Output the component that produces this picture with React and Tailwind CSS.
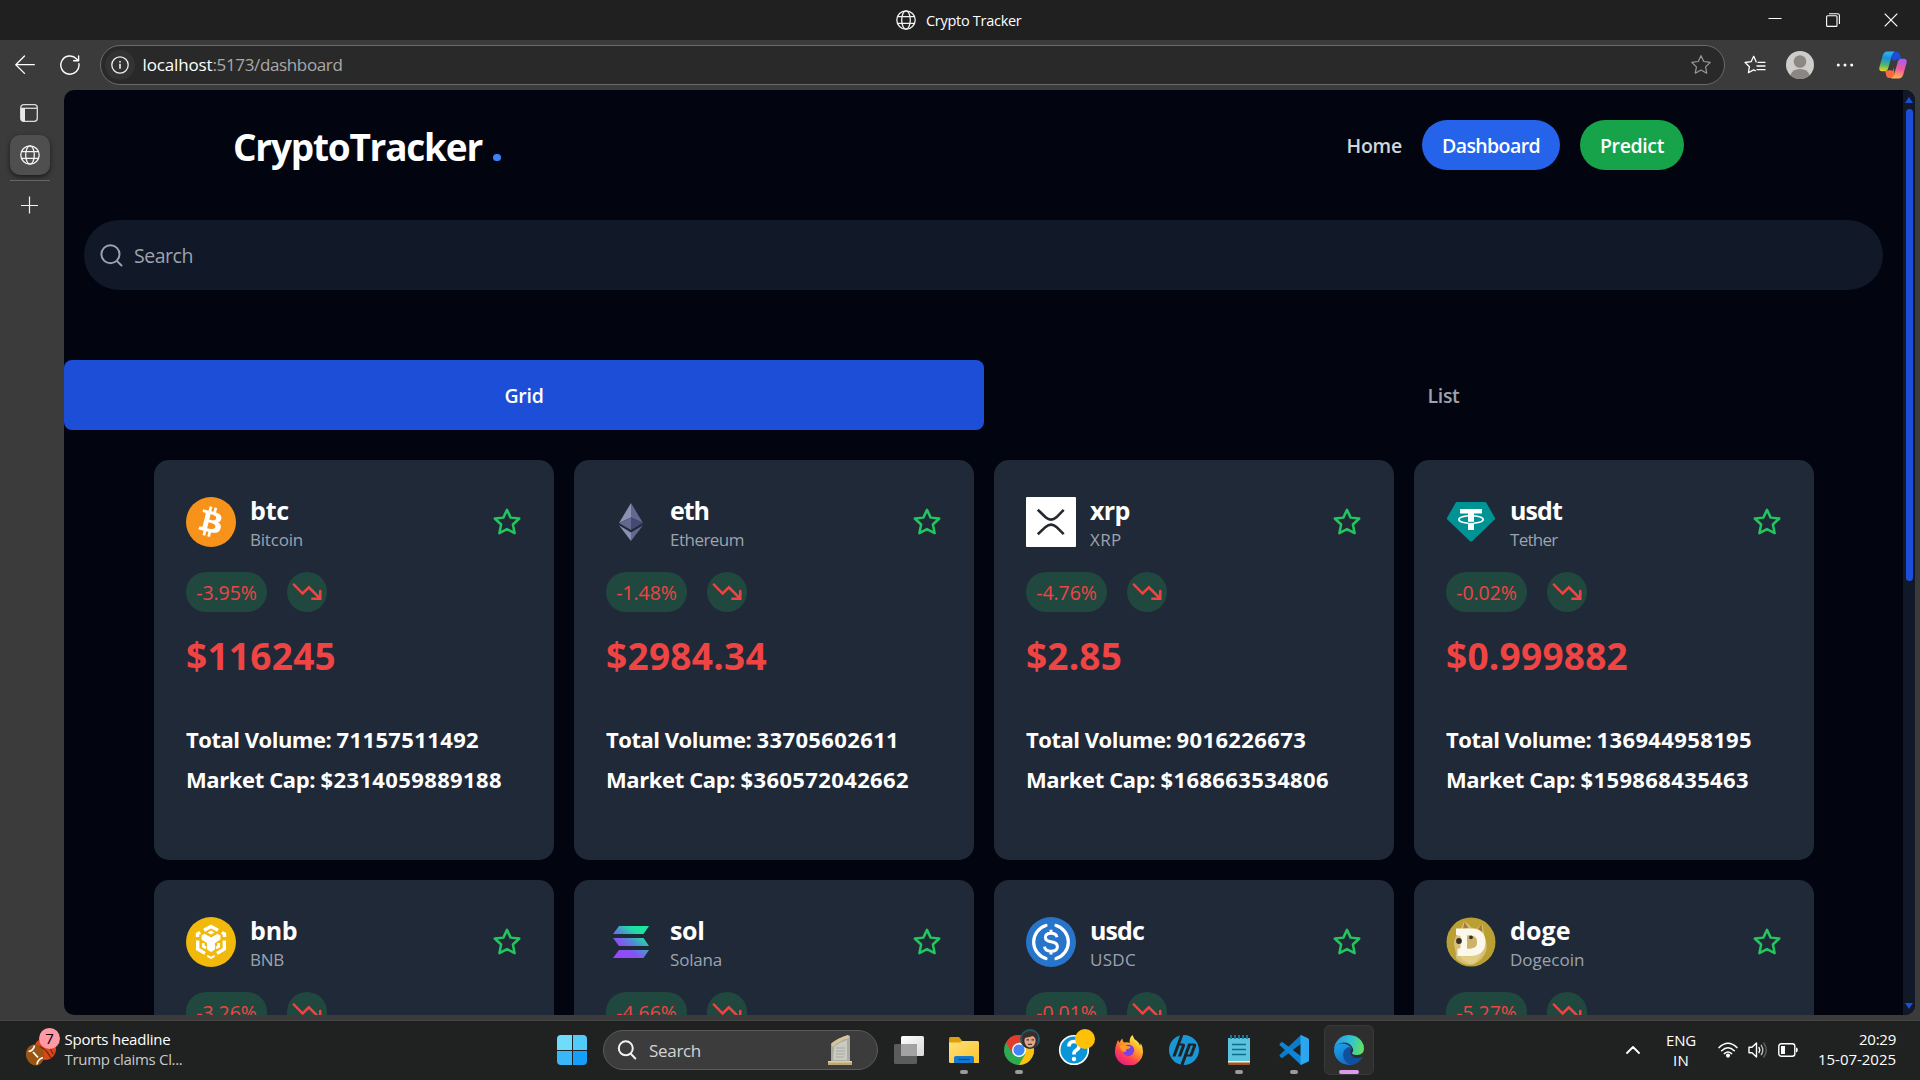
import React, { useLayoutEffect, useRef } from "react";
import { FaBitcoin } from "react-icons/fa";
import { SiHp } from "react-icons/si";

/* Inline text whose tracking is adjusted so that it occupies `w` pixels. */
function Fit({ w, className = "", children }) {
  const ref = useRef(null);
  useLayoutEffect(() => {
    const el = ref.current;
    el.style.letterSpacing = "0px";
    const natural = el.getBoundingClientRect().width;
    el.style.letterSpacing = `${(w - natural) / el.textContent.length}px`;
  }, [w, children]);
  return (
    <span ref={ref} className={"inline-block whitespace-pre " + className}>
      {children}
    </span>
  );
}

const Globe = () => (
  <svg viewBox="0 0 20 20" className="size-5" fill="none" stroke="#f2f2f2" strokeWidth="1.3">
    <circle cx="10" cy="10" r="9.2" />
    <ellipse cx="10" cy="10" rx="4.3" ry="9.2" />
    <path d="M1.6 6.7h16.8M1.6 13.3h16.8" />
  </svg>
);

function TitleBar() {
  return (
    <div className="flex h-10 shrink-0 items-center bg-[#202020]">
      <div className="ml-[896px] flex items-center">
        <Globe />
        <Fit w={95.5} className="ml-[10px] pt-px text-[14.5px]">Crypto Tracker</Fit>
      </div>
      <div className="ml-auto flex items-center pr-[22px]">
        <svg viewBox="0 0 14 14" className="size-[14px]" fill="none" stroke="#fff" strokeWidth="1"><path d="M.5 5.5h13" /></svg>
        <svg viewBox="0 0 14 14" className="ml-11 size-[14px]" fill="none" stroke="#fff" strokeWidth="1.1"><rect x=".6" y="2.8" width="10.4" height="10.6" rx="1" /><path d="M3 .8h8.6q1.8 0 1.8 1.8V11" /></svg>
        <svg viewBox="0 0 14 14" className="ml-11 size-[14px]" fill="none" stroke="#fff" strokeWidth="1.2"><path d="M.7.7l12.6 12.6M13.3.7L.7 13.3" /></svg>
      </div>
    </div>
  );
}

const starPath = "M10 1.5l2.55 5.3 5.85.8-4.25 4.05 1.05 5.8L10 14.6l-5.2 2.85 1.05-5.8L1.6 7.6l5.85-.8z";

function Toolbar() {
  return (
    <div className="flex h-[50px] shrink-0 items-center pl-[15px]">
      <svg viewBox="0 0 20 20" className="size-5" fill="none" stroke="#fff" strokeWidth="1.3" strokeLinecap="round" strokeLinejoin="round"><path d="M19.3 9.7H.8M9.5 1L.8 9.7l8.7 8.7" /></svg>
      <svg viewBox="0 0 20 20" className="ml-[25px] size-5" fill="none" stroke="#fff" strokeWidth="1.4" strokeLinecap="round" strokeLinejoin="round"><path d="M18.9 8.6a9.1 9.1 0 1 1-2.3-4.7l1.9 1.8M18.6.9v4.9h-5" /></svg>
      <div className="ml-5 flex h-10 w-[1625px] items-center rounded-full border border-[#6a6a6a] bg-[#292929] pl-[4px]">
        <div className="flex size-[30px] items-center justify-center rounded-full bg-[#333333]">
          <svg viewBox="0 0 18 18" className="size-[18px]" fill="none" stroke="#f0f0f0" strokeWidth="1.3"><circle cx="9" cy="9" r="8.2" /><path d="M9 7.8v5M9 5v1.4" strokeWidth="1.6" /></svg>
        </div>
        <div className="ml-[7.5px] flex pb-px text-[17px] leading-6">
          <Fit w={70} className="text-white">localhost</Fit>
          <Fit w={130} className="text-[#a9a9a9]">:5173/dashboard</Fit>
        </div>
        <svg viewBox="0 0 20 20" className="mr-[12px] ml-auto size-[22px]" fill="none" stroke="#9a9a9a" strokeWidth="1.1" strokeLinejoin="round"><path d={starPath} /></svg>
      </div>
      <svg viewBox="0 0 22 20" className="ml-[19px] h-5 w-[22px]" fill="none" stroke="#fff" strokeWidth="1.3" strokeLinejoin="round" strokeLinecap="round"><path d="M12 6.800h.2L9.700 1.300 7.100 6.700l-6 .8 4.300 4.200-1 6 5.200-2.800 1.600.8M14 7.300h7M13 11h8M13 14.700h8" /></svg>
      <svg viewBox="0 0 28 28" className="ml-5 size-7"><circle cx="14" cy="14" r="14" fill="#cfcdca" /><circle cx="14" cy="10.500" r="6.300" fill="#8a8784" /><path d="M4.400 24.200Q6.300 18 14 18t9.600 6.200A14 14 0 0 1 4.400 24.200z" fill="#8a8784" /></svg>
      <svg viewBox="0 0 18 4" className="ml-[22px] h-1 w-[18px]" fill="#fff"><circle cx="2.300" cy="2" r="1.500" /><circle cx="9" cy="2" r="1.500" /><circle cx="15.700" cy="2" r="1.500" /></svg>
      <svg viewBox="0 0 28 28" className="ml-[25px] size-7">
        <defs>
          <linearGradient id="cpA" x1=".5" y1="0" x2=".4" y2="1"><stop offset="0" stopColor="#2fb4f5" /><stop offset=".35" stopColor="#1b8fd6" /><stop offset=".7" stopColor="#52b76b" /><stop offset="1" stopColor="#f0d21c" /></linearGradient>
          <linearGradient id="cpB" x1=".6" y1="0" x2=".4" y2="1"><stop offset="0" stopColor="#a95bf0" /><stop offset=".5" stopColor="#f0599a" /><stop offset="1" stopColor="#ffb350" /></linearGradient>
        </defs>
        <path d="M12 1h6q2 0 2.600 2l1.500 5h-3q-2 0-2.600 2l-2 4z" fill="#1a4fd8" />
        <path d="M16 27H10q-2 0-2.600-2L6 19.500h3.500q2 0 2.600-2l2-4z" fill="#ff6a3c" />
        <path d="M8.500.5H16q-2.200.8-3 3.500L9.300 17q-.9 3.200-4.300 3.200H3Q-.4 20.200.4 16.200L3.700 4.500Q4.900.5 8.500.5z" fill="url(#cpA)" />
        <path d="M19.500 27.500H12q2.200-.8 3-3.500l3.700-13q.9-3.200 4.300-3.200h2q3.400 0 2.600 4l-3.300 11.700q-1.200 4-4.800 4z" fill="url(#cpB)" />
        <path d="M16 9.500l-3.800 10" stroke="#3b3b3b" strokeWidth="3" />
      </svg>
    </div>
  );
}

function SideTabs() {
  return (
    <div className="flex w-16 shrink-0 flex-col pt-[14px] pl-[10px]">
      <svg viewBox="0 0 18 18" className="ml-[10px] size-[18px]" fill="none" stroke="#dcdcdc" strokeWidth="1.300"><rect x=".7" y=".7" width="16.600" height="16.600" rx="3" /><path d="M1 4.300h16" /><path d="M1 4.300h4v13H3q-2 0-2-2z" fill="#e8e8e8" stroke="none" /></svg>
      <div className="mt-[13px] flex size-10 items-center justify-center rounded-[10px] bg-[#4f4f4f] shadow-[0_2px_5px_rgba(0,0,0,0.55)]"><Globe /></div>
      <div className="mt-[5px] h-px w-10 bg-[#666666]" />
      <svg viewBox="0 0 18 18" className="mt-[15px] ml-[10px] size-[18px]" stroke="#f2f2f2" strokeWidth="1.200"><path d="M9.500 .5v17M1 9.500h17" /></svg>
    </div>
  );
}

const Bitcoin = () => (
  <div className="flex size-[50px] items-center justify-center rounded-full bg-[radial-gradient(circle,white_60%,#f7931a_62%)]">
    <FaBitcoin className="size-[50px] text-[#f7931a]" />
  </div>
);
const Ethereum = () => (
  <svg viewBox="0 0 50 50" className="size-[50px]">
    <path d="M25 6L13 26l12-5.500z" fill="#8a92b2" /><path d="M25 6l12 20-12-5.500z" fill="#62688f" />
    <path d="M13 26l12-5.500V33z" fill="#62688f" /><path d="M37 26l-12-5.500V33z" fill="#454a75" />
    <path d="M13 28.300L25 35.500V44z" fill="#8a92b2" /><path d="M37 28.300L25 35.500V44z" fill="#62688f" />
  </svg>
);
const Xrp = () => (
  <svg viewBox="0 0 50 50" className="size-[50px]">
    <rect width="50" height="50" rx="1" fill="#fff" />
    <path d="M11.800 12.800l7.800 7.500q5.400 4.600 10.800 0l7.300-7.500M11.800 37.200l7.800-7.300q5.400-4.600 10.800 0l7.300 7.300" fill="none" stroke="#23292f" strokeWidth="2.600" />
  </svg>
);
const Tether = () => (
  <svg viewBox="0 0 50 50" className="size-[50px]">
    <path d="M11 5h28q1 0 1.500.9L49 21q.4.800-.3 1.500L26 44.200q-1 .9-2 0L1.300 22.500Q.6 21.800 1 21L9.500 5.900Q10 5 11 5z" fill="#009393" />
    <path d="M14 12h22v4.500h-8V33h-6V16.500h-8z" fill="#fff" />
    <ellipse cx="25" cy="22.500" rx="12.200" ry="3.800" fill="none" stroke="#fff" strokeWidth="1.600" />
    <path d="M22 25.300h6" stroke="#009393" strokeWidth="1" />
  </svg>
);
const Bnb = () => (
  <svg viewBox="0 0 50 50" className="size-[50px]">
    <circle cx="25" cy="25" r="25" fill="#f0b90b" />
    <g fill="none" stroke="#fff" strokeWidth="3.400" strokeLinejoin="miter">
      <path d="M18 13.300L25 9.500l7 3.800M11.500 20v-3l2.700-1.600M38.500 20v-3l-2.700-1.600M11.700 23.500V32l7.300 4.400M38.300 23.500V32L31 36.400" />
      <path d="M17.300 26v3.500l2.700 1.500M32.700 26v3.500L30 31" strokeWidth="2.800" />
    </g>
    <path d="M15.500 18.500l3-1.700L25 20.500l6.500-3.700 3 1.700v4L29 26v6.500L25 35l-4-2.500V26l-5.500-3.500zM21.500 15.500L25 13.400l3.500 2.100L25 17.600zM21.300 37.800l3.700 2 3.700-2V40L25 42l-3.700-2z" fill="#fff" />
  </svg>
);
const Solana = () => (
  <svg viewBox="0 0 50 50" className="size-[50px]">
    <defs><linearGradient id="sol" gradientUnits="userSpaceOnUse" x1="40" y1="6" x2="12" y2="42"><stop offset="0" stopColor="#14f195" /><stop offset=".3" stopColor="#24d8a8" /><stop offset=".5" stopColor="#4f8fd0" /><stop offset=".7" stopColor="#8752f3" /><stop offset="1" stopColor="#9945ff" /></linearGradient></defs>
    <g fill="url(#sol)"><path d="M13 9h30l-5.500 8H7z" /><path d="M7 21h30.500l5.500 8H13z" /><path d="M13 33h30l-5.500 8H7z" /></g>
  </svg>
);
const Usdc = () => (
  <svg viewBox="0 0 50 50" className="size-[50px]">
    <circle cx="25" cy="25" r="25" fill="#2775ca" />
    <path d="M20 8.500a17.200 17.200 0 0 0 0 33M30 8.500a17.200 17.200 0 0 1 0 33" fill="none" stroke="#fff" strokeWidth="3.200" strokeLinecap="round" />
    <path d="M31 20.300q-.7-4.100-6-4.100-5.600 0-5.600 4.100 0 3.800 5.600 4.500 6.400.8 6.400 5 0 4.500-6.400 4.500-6 0-6.500-4.600M25 12.800v3.400M25 34v3.400" fill="none" stroke="#fff" strokeWidth="3" />
  </svg>
);
const Doge = () => (
  <svg viewBox="0 0 50 50" className="size-[50px]">
    <circle cx="25" cy="25" r="24.500" fill="#ba9f33" />
    <path d="M14 14L18 4.500q5 2 7 6l6 1 5-5q2 6 2 13 4 7 2 15-3 8-12 13-10 2-18-6 0-6-1-10-4-8 5-17.500z" fill="#d6bf78" />
    <path d="M17 12l1.500-7 4 6zM32 12l3.500-5 1 8z" fill="#a8793a" />
    <path d="M12 36q10 8 24-2-2 9-10 13-8 0-14-11z" fill="#e2cd84" />
    <path fillRule="evenodd" d="M10 11.500h14q15.500 0 15.500 13.500T24 39H11.500v-7l3-1V19l-4.500-1zM21 18.500v13h3q7 0 7-6.500t-7-6.500z" fill="#fbf7ea" />
    <path d="M21 18.500h3q7 0 7 6.500t-7 6.500h-3z" fill="#cdb36a" />
    <circle cx="13" cy="24" r="2.900" fill="#3a3020" /><circle cx="25" cy="20.300" r="1.900" fill="#3a2f1c" />
  </svg>
);

const coins = [
  { s: "btc", sw: 39, n: "Bitcoin", nw: 53, pct: "-3.95%", price: "$116245", pw: 150, vol: "71157511492", cap: "2314059889188", Logo: Bitcoin },
  { s: "eth", sw: 39, n: "Ethereum", nw: 74, pct: "-1.48%", price: "$2984.34", pw: 161, vol: "33705602611", cap: "360572042662", Logo: Ethereum },
  { s: "xrp", sw: 39.5, n: "XRP", nw: 31.5, pct: "-4.76%", price: "$2.85", pw: 96, vol: "9016226673", cap: "168663534806", Logo: Xrp },
  { s: "usdt", sw: 52, n: "Tether", nw: 47.5, pct: "-0.02%", price: "$0.999882", pw: 182, vol: "136944958195", cap: "159868435463", Logo: Tether },
  { s: "bnb", sw: 47.5, n: "BNB", nw: 34, pct: "-3.26%", Logo: Bnb },
  { s: "sol", sw: 34.5, n: "Solana", nw: 52, pct: "-4.66%", Logo: Solana },
  { s: "usdc", sw: 54, n: "USDC", nw: 46, pct: "-0.01%", Logo: Usdc },
  { s: "doge", sw: 60.5, n: "Dogecoin", nw: 74.5, pct: "-5.27%", Logo: Doge },
];

const DIGIT = 12.96;

function CoinCard({ coin }) {
  const { Logo } = coin;
  return (
    <div className="h-[400px] w-[400px] rounded-[15px] bg-[#1f2937] px-8 pt-[30px]">
      <div className="flex h-16 items-center">
        <Logo />
        <div className="ml-[14px] flex flex-col pt-[3px]">
          <Fit w={coin.sw} className="self-start text-[25px] leading-[33px] font-bold text-white">{coin.s}</Fit>
          <Fit w={coin.nw} className="self-start text-[17px] leading-[26px] text-[#9ca3af]">{coin.n}</Fit>
        </div>
        <svg viewBox="0 0 24 24" className="ml-auto size-[30px]" fill="none" stroke="#22c55e" strokeWidth="2" strokeLinejoin="round"><path d="M12 2.300l2.900 6.200 6.900.7-5.100 4.800 1.400 6.900-6.100-3.200-6.100 3.200 1.400-6.900-5.100-4.800 6.900-.7z" /></svg>
      </div>
      <div className="mt-[18px] flex gap-5">
        <div className="flex h-10 w-[81px] items-center justify-center rounded-full bg-[#20483f] pt-0.5 text-[19.500px] text-[#ef4444]"><Fit w={60.500}>{coin.pct}</Fit></div>
        <div className="flex size-10 items-center justify-center rounded-full bg-[#20483f]">
          <svg viewBox="0 0 24 24" className="size-[30px]" fill="none" stroke="#ef4444" strokeWidth="2" strokeLinecap="round" strokeLinejoin="miter"><path d="M1.500 6L8.500 13.200l5-5L22.300 17M16.200 17.300h6.400v-6.100" /></svg>
        </div>
      </div>
      {coin.price && (
        <>
          <div className="mt-[19px] h-[50px] text-[37px] leading-[50px] font-bold text-[#ef4444]"><Fit w={coin.pw}>{coin.price}</Fit></div>
          <div className="mt-[38px] text-[22px] leading-10 font-bold text-white">
            <div className="flex"><Fit w={150.500}>{"Total Volume: "}</Fit><Fit w={DIGIT * coin.vol.length}>{coin.vol}</Fit></div>
            <div className="flex"><Fit w={134.500}>{"Market Cap: "}</Fit><Fit w={DIGIT * (coin.cap.length + 1)}>{"$" + coin.cap}</Fit></div>
          </div>
        </>
      )}
    </div>
  );
}

function Page() {
  return (
    <div className="flex h-[925px] w-[1851px] overflow-hidden rounded-[10px] bg-[#02050f]">
      <main className="w-[1839px] shrink-0">
        <nav className="flex h-[130px] items-start pt-[30px] pr-[219px] pl-[169px]">
          <div className="flex h-[50px] items-center pt-[4px] text-[37px] font-bold">
            <Fit w={249} className="text-white">CryptoTracker</Fit>
            <div className="mt-[21px] ml-[11px] size-[7.500px] rounded-full bg-[#3b82f6]" />
          </div>
          <div className="ml-auto flex items-center gap-5 text-[19.500px] font-semibold text-white">
            <Fit w={55.500} className="pt-0.5 text-[#d1d5db]">Home</Fit>
            <div className="flex h-[50px] w-[138px] items-center justify-center rounded-full bg-[#2563eb] pt-0.5"><Fit w={98}>Dashboard</Fit></div>
            <div className="flex h-[50px] w-[104px] items-center justify-center rounded-full bg-[#16a34a] pt-0.5"><Fit w={64}>Predict</Fit></div>
          </div>
        </nav>
        <div className="ml-5 flex h-[70px] w-[1799px] items-center rounded-full bg-[#111827] pl-[15px] text-[#9ca3af]">
          <svg viewBox="0 0 24 24" className="size-[25px]" fill="none" stroke="currentColor" strokeWidth="1.900" strokeLinecap="round"><circle cx="11" cy="10.800" r="8.700" /><path d="M17.600 17.600l4 4" /></svg>
          <Fit w={59} className="ml-[10px] pt-0.5 text-[19.500px]">Search</Fit>
        </div>
        <div className="mt-[70px] flex h-[70px] text-[19.500px] font-semibold">
          <div className="flex w-[920px] items-center justify-center rounded-[8px] bg-[#1d4ed8] pt-0.5 text-white"><Fit w={39}>Grid</Fit></div>
          <div className="flex flex-1 items-center justify-center pt-0.5 text-[#9ca3af]"><Fit w={32}>List</Fit></div>
        </div>
        <div className="mt-[30px] ml-[90px] grid w-[1660px] grid-cols-4 gap-5">
          {coins.map((c) => <CoinCard key={c.s} coin={c} />)}
        </div>
      </main>
      <div className="flex w-3 shrink-0 flex-col items-center bg-[#111827] pt-[7px] pb-[6px]">
        <svg viewBox="0 0 8 6" className="h-1.5 w-2"><path d="M4 0l4 6H0z" fill="#1d4ed8" /></svg>
        <div className="mt-[6px] h-[472px] w-[7px] rounded-full bg-[#1d4ed8]" />
        <svg viewBox="0 0 8 6" className="mt-auto h-1.5 w-2"><path d="M0 0h8L4 6z" fill="#1d4ed8" /></svg>
      </div>
    </div>
  );
}

const TaskView = () => (
  <svg viewBox="0 0 30 30" className="size-[30px]">
    <defs><linearGradient id="tv" x1="0" y1="0" x2="1" y2="1"><stop offset="0" stopColor="#fff" /><stop offset="1" stopColor="#d8d8d8" /></linearGradient></defs>
    <rect x="7" y="1" width="23" height="20" rx="1.500" fill="url(#tv)" /><rect x="0" y="9" width="23" height="20" rx="1.500" fill="#5c5c5c" /><path d="M7 9h14.500q1.500 0 1.500 1.500V21H7z" fill="#a3a3a3" />
  </svg>
);
const Explorer = () => (
  <svg viewBox="0 0 30 30" className="size-[30px]">
    <defs><linearGradient id="ex" x1="0" y1="0" x2="1" y2="1"><stop offset="0" stopColor="#ffe07a" /><stop offset="1" stopColor="#fcc52c" /></linearGradient></defs>
    <path d="M0 3.500Q0 2 1.500 2H10l3 3.500V9H0z" fill="#dea00a" /><path d="M0 7.500h11L13 6h15.500Q30 6 30 7.500V28H1.500Q0 28 0 27z" fill="url(#ex)" />
    <path d="M5 28v-5q0-2 2-2h16q2 0 2 2v5z" fill="#1478cf" /><path d="M9.500 24.500h11" stroke="#0b4a8a" strokeWidth="1.200" />
  </svg>
);
const Chrome = () => (
  <svg viewBox="0 0 30 30" className="size-[30px] overflow-visible">
    <circle cx="15" cy="15" r="15" fill="#2da94f" />
    <path d="M15 0a15 15 0 0 1 13 7.500H15L8.500 18.700 2 7.500A15 15 0 0 1 15 0z" fill="#e33b2e" />
    <path d="M28 7.500A15 15 0 0 1 15 30l6.500-11.200L15 7.500z" fill="#fdc10f" />
    <circle cx="15" cy="15" r="7" fill="#fff" /><circle cx="15" cy="15" r="5.600" fill="#4285f4" />
    <circle cx="26" cy="4" r="10" fill="#1d5a6e" /><path d="M19 11q-2-8 0-12 7-6 14 0 2 5-.5 12-6.500 5-13.500 0z" fill="#3b2c28" /><ellipse cx="26" cy="6" rx="5.600" ry="6.500" fill="#dba58c" /><path d="M20 3q2-5 7-4 5 0 5.500 4l-4-2-3 1z" fill="#3b2c28" /><path d="M22.500 4.800h2.500M27.500 4.800H30M24 9.300h4" stroke="#5b3228" strokeWidth="1.200" />
  </svg>
);
const Help = () => (
  <svg viewBox="0 0 30 30" className="size-[30px] overflow-visible">
    <circle cx="15" cy="15" r="14.300" fill="#0a95d8" stroke="#fff" strokeWidth="1.600" />
    <path d="M10 11.500Q10 6.500 15 6.500t5 4.500q0 2.500-2.500 4T15 18.500v1" fill="none" stroke="#fff" strokeWidth="3.600" /><circle cx="15" cy="24" r="2.200" fill="#fff" />
    <circle cx="26" cy="4" r="10" fill="#ffc107" />
  </svg>
);
const Firefox = () => (
  <svg viewBox="0 0 30 30" className="size-[30px]">
    <defs>
      <linearGradient id="ff" gradientUnits="userSpaceOnUse" x1="24" y1="3" x2="7" y2="28"><stop offset="0" stopColor="#fff04a" /><stop offset=".35" stopColor="#ffa824" /><stop offset=".7" stopColor="#ff4450" /><stop offset="1" stopColor="#e81e80" /></linearGradient>
    </defs>
    <path d="M2.500 9Q3 6.500 4.300 5q.3 1.700 1.200 2.700Q7 4.500 8.500 3.500q-.2 2.500 1.500 4 3.500-.5 6 .3-1.500-5 2.500-7.800 1 4 4.500 6 2.300 1.500 3 4.500.8-1 .8-2.500 2.200 4 2.200 8.500A14 14 0 0 1 1 17Q.8 12.500 2.500 9z" fill="url(#ff)" />
    <circle cx="14.500" cy="15.300" r="5.700" fill="#7d3fe6" />
    <path d="M5.500 11q4-3 8 .3 2.300-.5 3.200.7-1 1.800-3.200 2-2.500 1-1.500 3-5 .5-6.500-6z" fill="#ff9a24" />
  </svg>
);
const Notepad = () => (
  <svg viewBox="0 0 30 30" className="size-[30px]">
    <rect x="4" y="26" width="22" height="4" rx="1" fill="#a5551c" /><rect x="4" y="25" width="22" height="2.500" fill="#eee" />
    <path d="M4 3h22v23H4z" fill="#5cc3dd" /><path d="M7 0v4M11 0v4M15 0v4M19 0v4M23 0v4" stroke="#1b7d9c" strokeWidth="1.800" />
    <path d="M8 9.500h14M8 14.500h14M8 19.500h14" stroke="#0d6d8e" strokeWidth="1.700" />
  </svg>
);
const VsCode = () => (
  <svg viewBox="0 0 30 30" className="size-[30px]">
    <path d="M22 0L.8 19.800q-.6.700 0 1.400l1.500 1.500q.7.500 1.400 0L23 8z" fill="#0a7ccc" />
    <path d="M22 30L.8 10.200q-.6-.7 0-1.400l1.500-1.500q.7-.5 1.400 0L23 22z" fill="#1084d4" />
    <path d="M22 0l7 3.200q1 .5 1 1.600v20.400q0 1.100-1 1.600L22 30q-.5-.3-.5-1V1q0-.7.500-1z" fill="#2ba6f0" />
  </svg>
);
const Edge = () => (
  <svg viewBox="0 0 30 30" className="size-[30px]">
    <defs>
      <linearGradient id="egTop" gradientUnits="userSpaceOnUse" x1="2" y1="8" x2="29" y2="14"><stop offset="0" stopColor="#2a9de0" /><stop offset=".5" stopColor="#2fc3d6" /><stop offset="1" stopColor="#63e25a" /></linearGradient>
      <linearGradient id="egLeft" gradientUnits="userSpaceOnUse" x1="4" y1="10" x2="16" y2="30"><stop offset="0" stopColor="#1b9de8" /><stop offset="1" stopColor="#1268bd" /></linearGradient>
    </defs>
    <path d="M0 15Q1 8.500 8 8.500q7 0 9.500 5-5 .5-4.500 6 .7 6 8 9-3 1.500-6 1.500A15 15 0 0 1 0 15z" fill="url(#egLeft)" />
    <path d="M9 20q0-5.500 5.500-8 2.500 0 3.500 2-2 1.500-1.500 4 1.500 5.500 7.500 5 2.500-.3 4-1.300.8-.2.400.8Q25 29 18 29.700 10 28.500 9 20z" fill="#124f9c" />
    <path d="M0 14.500A15 15 0 0 1 15 0q8 0 12.500 6 2.500 3.500 2.500 7.500 0 6.500-7 6.500-3.500 0-4.800-1.300-.4-.7.300-1.500 1.200-1.500.3-4Q16.500 7.500 9.500 7.500 2.500 8 0 14.500z" fill="url(#egTop)" />
  </svg>
);

const apps = [
  { id: "view", node: <TaskView /> },
  { id: "files", node: <Explorer />, open: true },
  { id: "chrome", node: <Chrome />, open: true },
  { id: "help", node: <Help /> },
  { id: "firefox", node: <Firefox /> },
  { id: "hp", node: <SiHp className="size-[30px] text-[#1a96d5]" /> },
  { id: "notes", node: <Notepad />, open: true },
  { id: "code", node: <VsCode />, open: true },
  { id: "edge", node: <Edge />, open: true, active: true },
];

function Taskbar() {
  return (
    <div className="flex h-[60px] items-center border-t border-[#454545] bg-[#202222] pb-px text-white">
      <div className="flex w-[557px] shrink-0 items-center pl-[25px]">
        <div className="relative size-9">
          <svg viewBox="0 0 36 36" className="size-9">
            <circle cx="20" cy="17" r="11" fill="#d8481c" /><path d="M10 14q10 0 16 12M14 8q10 4 14 14" stroke="#7a250c" strokeWidth="1.300" fill="none" />
            <g transform="rotate(-14 10 23)"><ellipse cx="10" cy="23" rx="9" ry="10.500" fill="#9a5512" /></g>
            <path d="M3.500 19.500q5-.5 6-6M12 32.500q.5-5 6-7" stroke="#fff" strokeWidth="1.600" fill="none" />
            <path d="M8 20l5 5.500" stroke="#fff" strokeWidth="1.800" />
          </svg>
          <div className="absolute -top-[4px] left-[14px] flex size-[21px] items-center justify-center rounded-full bg-[#ff99a4] text-[15px] text-black">7</div>
        </div>
        <div className="ml-[3.500px] flex flex-col pb-0.5 text-[15px] leading-5">
          <Fit w={106} className="self-start">Sports headline</Fit>
          <Fit w={118} className="self-start text-[#c9c9c9]">Trump claims Cl...</Fit>
        </div>
      </div>
      <div className="grid size-[30px] shrink-0 grid-cols-2 gap-px">
        <div className="rounded-tl-sm bg-[#6fdcfb]" /><div className="rounded-tr-sm bg-[#52cbfa]" /><div className="rounded-bl-sm bg-[#38b8f8]" /><div className="rounded-br-sm bg-[#169ff8]" />
      </div>
      <div className="ml-4 flex h-10 w-[275px] shrink-0 items-center rounded-full border border-[#5a5a5a] bg-[#3c3c3c] pl-[13px]">
        <svg viewBox="0 0 20 20" className="size-5" fill="none" stroke="#f2f2f2" strokeWidth="2" strokeLinecap="round"><circle cx="8.800" cy="8.300" r="7" /><path d="M13.800 13.700l4.500 4.800" /></svg>
        <Fit w={52} className="ml-[12px] pt-px text-[17px] text-[#d4d4d4]">Search</Fit>
        <svg viewBox="0 0 26 32" className="mr-[24px] ml-auto h-8 w-[26px]"><path d="M4 27V10Q8 5 21 1l2 1v25z" fill="#a9aaa0" /><path d="M4 10Q11 4 21 1l1 3Q13 6 6 13z" fill="#d3c49a" /><path d="M7 13q6-5 13-7v20H6z" fill="#c9cac2" /><path d="M9 14h9M9 17h9M9 20h9M9 23h8" stroke="#a4a59b" strokeWidth=".9" /><path d="M1 27h24v4H1z" fill="#bda777" /><path d="M1 27h24v1.500H1z" fill="#ded0a8" /></svg>
      </div>
      <div className="ml-[3px] flex">
        {apps.map((a) => (
          <div key={a.id} className="flex h-[50px] w-[55px] justify-center">
            <div className={"relative flex h-[50px] w-[50px] items-center justify-center rounded-md " + (a.active ? "border border-[#393939] bg-[#2e2e2e]" : "")}>
              {a.node}
              {a.open && <div className={"absolute left-1/2 h-1 -translate-x-1/2 rounded-full " + (a.active ? "bottom-0 w-5 bg-[#dc9be4]" : "bottom-px w-2 bg-[#9b9b9b]")} />}
            </div>
          </div>
        ))}
      </div>
      <div className="ml-auto flex items-center pr-[24px]">
        <svg viewBox="0 0 14 8" className="h-2 w-[14px]" fill="none" stroke="#fff" strokeWidth="1.800" strokeLinecap="round" strokeLinejoin="round"><path d="M1 7l6-6 6 6" /></svg>
        <div className="ml-[26px] flex w-[30px] flex-col items-center pb-px text-[15px] leading-5"><Fit w={30}>ENG</Fit><Fit w={16}>IN</Fit></div>
        <svg viewBox="0 0 20 16" className="ml-[22px] h-4 w-5" fill="none" stroke="#fff" strokeWidth="1.500" strokeLinecap="round"><path d="M1 5.600q9-8.700 18 0M3.700 8.700q6.300-5.900 12.600 0M6.400 11.600q3.600-3.200 7.200 0" /><circle cx="10" cy="13.600" r="1.300" fill="#fff" /></svg>
        <svg viewBox="0 0 20 18" className="ml-[10px] h-[18px] w-5" fill="none" stroke="#fff" strokeWidth="1.400" strokeLinecap="round" strokeLinejoin="round"><path d="M1 6.300h3L8.500 2v14L4 11.700H1zM11 6.500q1.600 2.500 0 5" /><path d="M13.300 4.300q3 4.700 0 9.400" stroke="#bbb" /><path d="M15.800 2q5 7 0 14" stroke="#5d5d5d" /></svg>
        <svg viewBox="0 0 20 14" className="ml-[10px] h-[14px] w-5" fill="none" stroke="#fff" strokeWidth="1.400"><rect x=".8" y=".8" width="16" height="12.400" rx="2.500" /><path d="M3 3h4v8H3z" fill="#fff" stroke="none" /><path d="M18 4.600q1.800 0 1.800 2.400T18 9.400z" fill="#fff" stroke="none" /></svg>
        <div className="ml-[20px] flex flex-col items-end pb-0.5 text-[15px] leading-5"><Fit w={37}>20:29</Fit><Fit w={78}>15-07-2025</Fit></div>
      </div>
    </div>
  );
}

export default function App() {
  return (
    <div className="flex h-[1080px] w-[1920px] flex-col overflow-hidden bg-[#3b3b3b] font-['Open_Sans','Noto_Sans',sans-serif] text-white">
      <TitleBar />
      <Toolbar />
      <div className="flex h-[930px] shrink-0">
        <SideTabs />
        <Page />
      </div>
      <Taskbar />
    </div>
  );
}
